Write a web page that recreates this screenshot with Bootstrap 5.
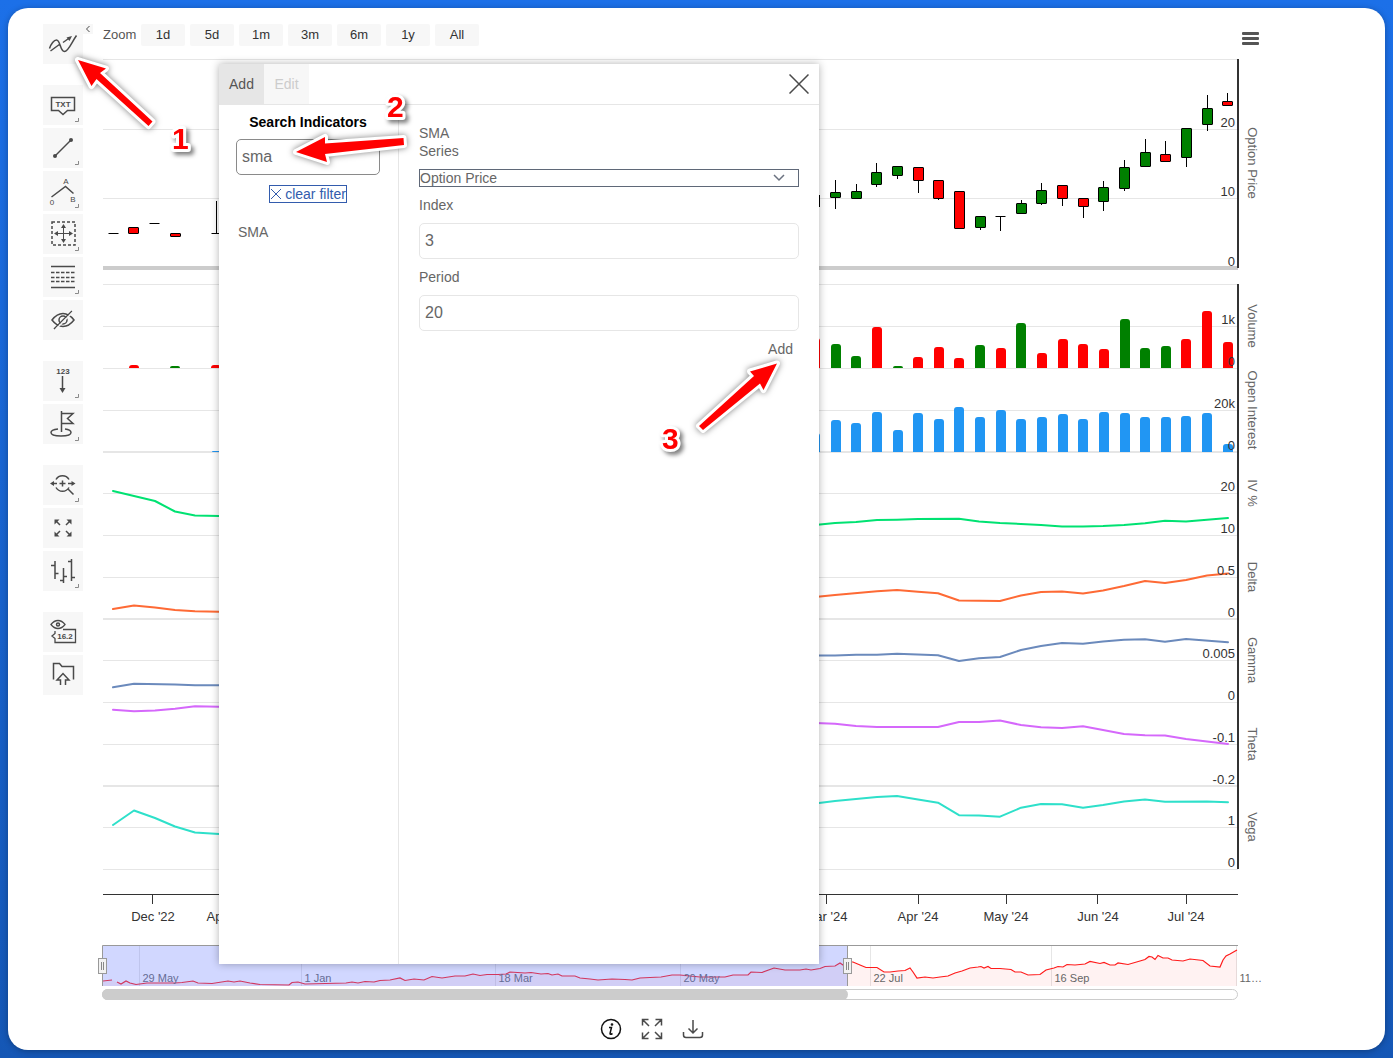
<!DOCTYPE html>
<html lang="en">
<head>
<meta charset="utf-8">
<meta name="viewport" content="width=device-width, initial-scale=1">
<title>Option chart</title>
<link href="https://cdn.jsdelivr.net/npm/bootstrap@5.3.0/dist/css/bootstrap.min.css" rel="stylesheet">
<style>
  body { font-family: "Liberation Sans", Arial, sans-serif; font-size: 14px; color: #333; min-height: 100vh; padding: 8px; background: linear-gradient(#1c70e8, #1557b5) fixed; }
  .shell { background: #fff; border-radius: 20px; padding: 16px 124px 10px 35px; box-shadow: 0 1px 6px rgba(0,0,0,.3); }
  .toolbar-col { width: 40px; gap: 21px; }
  .tool-group { gap: 3px; }
  .tool { width: 40px; height: 40px; border: 0; padding: 0; background: #f7f7f7; display: block; }
  .tool svg, .ico { display: block; fill: none; stroke: #4a4a4a; stroke-width: 1.5; }
  .tool text { fill: #4a4a4a; stroke: none; font-size: 8px; text-anchor: middle; }
  .tool .solid { fill: #4a4a4a; stroke: none; }
  .tool .corner { stroke: #8a8a8a; stroke-width: 1; }
  .fold { width: 10px; height: 10px; border: 0; padding: 0; background: #f7f7f7; }
  .chart-head { height: 26px; padding-left: 10px; gap: 5px; font-size: 13px; }
  .zoom-label { width: 33px; color: #555; line-height: 22px; }
  .range { width: 44px; height: 22px; border: 0; border-radius: 2px; padding: 0; background: #f7f7f7; color: #333; }
  .burger { border: 0; padding: 0; background: none; margin: 8px 2px 0 auto; height: 14px; }
  .burger span { display: block; width: 17px; height: 3px; background: #555; border-radius: 1px; margin-bottom: 2px; }
  .plot { display: block; width: 100%; overflow: visible; font-size: 13px; }
  .dialog-box { left: 126px; top: 40px; width: 600px; height: 900px; background: #fff; color: #666; box-shadow: 0 0 8px rgba(0,0,0,.3); }
  .dialog-head { height: 41px; border-bottom: 1px solid #e6e6e6; }
  .tab-btn { width: 45px; height: 40px; border: 0; padding: 0; background: #f7f7f7; color: #ccc; }
  .tab-btn.on { background: #e6e6e6; color: #555; }
  .close-btn { border: 0; background: none; padding: 0; margin: 0 10px 0 auto; }
  .side { width: 180px; border-right: 1px solid #e6e6e6; padding: 8px 18px 0 17px; }
  .side h2 { font-size: 14px; line-height: 18px; font-weight: 700; color: #000; margin-bottom: 8px; }
  .box { height: 36px; width: 100%; border: 1px solid #e6e6e6; border-radius: 5px; padding: 0 5px; font-size: 16px; color: #666; background: #fff; }
  .box.search { border-color: #8a8a8a; }
  .clear-btn { border: 1px solid #335cad; color: #335cad; background: none; height: 18px; padding: 0; line-height: 16px; margin-top: 10px; gap: 3px; }
  .clear-btn svg { stroke: #335cad; stroke-width: 1; }
  .result { border: 0; background: none; color: #666; padding: 0; margin: 19px 0 0 2px; }
  .params { padding: 19px 20px 0; line-height: 18px; }
  .params label { line-height: 18px; }
  .series { width: 100%; height: 18px; border: 1px solid #5f6878; color: #666; padding: 0; line-height: 16px; appearance: none; margin: 9px 0;
    background: #fff url("data:image/svg+xml,%3Csvg xmlns='http://www.w3.org/2000/svg' viewBox='0 0 12 8'%3E%3Cpath d='M1 1l5 5 5-5' fill='none' stroke='%236b7280' stroke-width='1.5'/%3E%3C/svg%3E") no-repeat right 13px center / 12px 8px; }
  .params .box { margin: 9px 0; }
  .add-btn { border: 0; background: none; color: #666; padding: 0 6px; line-height: 18px; }
  .notes { top: 0; left: 0; width: 100%; overflow: visible; pointer-events: none; fill: #f00; stroke: #fff; stroke-width: 6px; stroke-linejoin: round; paint-order: stroke; font-size: 30px; font-weight: 700; }
  .arrows { filter: drop-shadow(0 0 3px rgba(0,0,0,.5)); }
  .digits { filter: drop-shadow(3px 3px 2px rgba(0,0,0,.5)); }
  .actions { gap: 19px; margin-top: 16px; }
  .actions button { border: 0; background: none; padding: 0; }
</style>
<script src="https://cdn.jsdelivr.net/npm/bootstrap@5.3.0/dist/js/bootstrap.bundle.min.js"></script>
</head>
<body class="d-flex flex-column">
<main class="shell flex-grow-1">
  <div class="d-flex position-relative align-items-start">
    <nav class="toolbar-col d-flex flex-column flex-shrink-0" aria-label="Chart tools">
      <div class="tool-group d-flex flex-column">
        <button class="tool" aria-label="Indicators"><svg width="40" height="40"><path d="M6.500 24.500C8 20 11 16 13.500 16c4 0 3.500 11.500 8 11.500 4 0 7-9 12-16M7.500 27L17 20M20 18.500L27 13.500"/><path class="solid" d="M29 12l-5.500 1.500 3 3.500z"/></svg></button>
      </div>
      <div class="tool-group d-flex flex-column">
        <button class="tool" aria-label="Text label"><svg width="40" height="40"><path d="M8.500 12.500h23v13h-7L20 29.500l-4.500-4h-7z"/><text x="20" y="22" font-weight="700">TXT</text><path class="corner" d="M35.500 33v3.500H32"/></svg></button>
        <button class="tool" aria-label="Line"><svg width="40" height="40"><path d="M12 28L28 12"/><circle class="solid" cx="12" cy="28" r="2"/><circle class="solid" cx="28" cy="12" r="2"/><path class="corner" d="M35.500 33v3.500H32"/></svg></button>
        <button class="tool" aria-label="Elliott line"><svg width="40" height="40"><path d="M8.500 26L22.500 15.500l8 7"/><text x="23" y="13">A</text><text x="9" y="34">0</text><text x="30" y="31">B</text><path class="corner" d="M35.500 33v3.500H32"/></svg></button>
        <button class="tool" aria-label="Measure"><svg width="40" height="40"><rect x="9" y="8" width="23" height="23" stroke-dasharray="3 2"/><path d="M12.500 19.500h16M20.500 11.500v16" stroke-width="1"/><path class="solid" d="M11 19.500l4-2.500v5zM30 19.500l-4-2.500v5zM20.500 10l-2.500 4h5zM20.500 29l-2.500-4h5z"/><path class="corner" d="M35.500 33v3.500H32"/></svg></button>
        <button class="tool" aria-label="Fibonacci"><svg width="40" height="40"><path d="M8 9.500h24M8 30.500h24"/><path d="M8 15.500h24M8 20.500h24M8 24.500h24" stroke-dasharray="3.500 1.500"/><path class="corner" d="M35.500 33v3.500H32"/></svg></button>
        <button class="tool" aria-label="Hide annotations"><svg width="40" height="40"><path d="M9 20q5-6.500 11-6.500T31 20q-5 6.500-11 6.500T9 20zM11 29L29 11"/><circle cx="20" cy="20" r="4"/><path d="M13 29L31 11" stroke="#f7f7f7"/></svg></button>
      </div>
      <div class="tool-group d-flex flex-column">
        <button class="tool" aria-label="Counter"><svg width="40" height="40"><text x="20" y="13" font-weight="700">123</text><path d="M19.500 15v13"/><path class="solid" d="M19.500 32l-3-5h6z"/><path class="corner" d="M35.500 33v3.500H32"/></svg></button>
        <button class="tool" aria-label="Flag"><svg width="40" height="40"><path d="M18.500 28V7M18.500 9.500H30L24.500 14.500 30 19.500H18.500M15 25c-5 .5-7 2-7 3.500 0 2 4 3.500 10 3.500s10-1.500 10-3.500c0-1.500-2-3-6-3.500"/><path class="corner" d="M35.500 33v3.500H32"/></svg></button>
      </div>
      <div class="tool-group d-flex flex-column">
        <button class="tool" aria-label="Zoom"><svg width="40" height="40"><path d="M13 14.500a7.500 7.500 0 0 1 13 0M13 22.500a7.500 7.500 0 0 0 13 0M25 24l5.500 5.500M16.500 18.500h6M19.500 15.500v6M9 18.500h5M25 18.500h5"/><path class="solid" d="M7 18.500l4-2.500v5zM32.500 18.500l-4-2.500v5z"/><path class="corner" d="M35.500 33v3.500H32"/></svg></button>
        <button class="tool" aria-label="Full screen"><svg width="40" height="40"><path d="M17 17l-4-4M23 17l4-4M17 23l-4 4M23 23l4 4"/><path class="solid" d="M11.500 11.500h5l-5 5zM28.500 11.500h-5l5 5zM11.500 28.500h5l-5-5zM28.500 28.500h-5l5-5z"/></svg></button>
        <button class="tool" aria-label="Chart type"><svg width="40" height="40"><path d="M12 10v18M8 14.500h4M12 22.500h3.500M20.500 17v15M17 29.500h3.500M20.500 25.500H24M28.500 8v22M25 10.500h3.500M28.500 26.500H32"/><path class="corner" d="M35.500 33v3.500H32"/></svg></button>
      </div>
      <div class="tool-group d-flex flex-column">
        <button class="tool" aria-label="Price indicator"><svg width="40" height="40"><path d="M8 12.500q3-4 7-4t7 4q-3 4-7 4t-7-4zM20 17.500h12.500v13H12v-4l-3-2.500 3-2.500V19" stroke-width="1.300"/><circle cx="15" cy="12.500" r="1.500"/><text x="22" y="27" font-weight="700">16.2</text></svg></button>
        <button class="tool" aria-label="Save"><svg width="40" height="40"><path d="M10.500 24.500V8.500h6l2.500 3H30.500v13M17.500 30v-5H14l6-6.500 6 6.500h-3.500v5"/></svg></button>
      </div>
    </nav>
    <button class="fold flex-shrink-0" aria-label="Collapse toolbar"><svg class="ico" width="10" height="10" stroke-width="1"><path d="M6.500 2L3.500 5l3 3" stroke-width="1"/></svg></button>

    <section class="flex-grow-1 position-relative">
      <div class="chart-head d-flex align-items-start">
        <span class="zoom-label">Zoom</span>
        <button class="range">1d</button><button class="range">5d</button><button class="range">1m</button><button class="range">3m</button><button class="range">6m</button><button class="range">1y</button><button class="range">All</button>
        <button class="burger" aria-label="Chart menu"><span></span><span></span><span></span></button>
      </div>
      <svg class="plot" id="plot" viewBox="93 50 1168 952" role="img" aria-label="Option price history"></svg>

      <div class="dialog-box position-absolute d-flex flex-column" role="dialog" aria-label="Indicators">
        <div class="dialog-head d-flex flex-shrink-0">
          <button class="tab-btn on">Add</button><button class="tab-btn">Edit</button>
          <button class="close-btn" aria-label="Close"><svg class="ico" width="20" height="20"><path d="M.5.500l19 19M19.500.500l-19 19"/></svg></button>
        </div>
        <div class="d-flex flex-grow-1">
          <div class="side flex-shrink-0">
            <h2 class="text-center"><label for="q">Search Indicators</label></h2>
            <input class="box search" id="q" type="text" value="sma">
            <div class="d-flex justify-content-center">
              <button class="clear-btn d-flex align-items-center"><svg width="12" height="12"><path d="M1 1l10 10M11 1L1 11"/></svg>clear filter</button>
            </div>
            <button class="result">SMA</button>
          </div>
          <form class="params flex-grow-1">
            <div>SMA</div>
            <label class="d-block" for="series">Series</label>
            <select class="series d-block" id="series"><option>Option Price</option></select>
            <label class="d-block" for="index">Index</label>
            <input class="box d-block" id="index" type="text" value="3">
            <label class="d-block" for="period">Period</label>
            <input class="box d-block" id="period" type="text" value="20">
            <div class="text-end"><button class="add-btn" type="button">Add</button></div>
          </form>
        </div>
      </div>
    </section>

    <svg class="notes position-absolute" viewBox="43 24 1218 978">
      <g class="arrows">
        <path d="M78 60L106 68.500 100 73 152.500 121.500 148.500 126 96.500 79 91.500 86z"/>
        <path d="M296 152L325 137 325 143.500 403.500 138 404 145 325 154 327 162z"/>
        <path d="M777 363.500L750 371.500 754 376 699 426 703 430 760 383.500 763.500 390z"/>
      </g>
      <g class="digits"><text x="172" y="149">1</text><text x="387" y="117">2</text><text x="662" y="449">3</text></g>
    </svg>
  </div>

  <div class="actions d-flex justify-content-center">
    <button aria-label="Info"><svg class="ico" width="22" height="22" style="stroke:#111"><circle cx="11" cy="11" r="9.500"/><path d="M9 9.500h2.500L10 15.500q0 1.500 2.500 0"/><circle cx="12" cy="6.500" r=".6"/></svg></button>
    <button aria-label="Expand"><svg class="ico" width="22" height="22"><path d="M1.500 7.500v-6h6M1.500 1.500l6.500 6.500M14.500 1.500h6v6M20.500 1.500L14 8M1.500 14.500v6h6M1.500 20.500L8 14M20.500 14.500v6h-6M20.500 20.500L14 14"/></svg></button>
    <button aria-label="Download"><svg class="ico" width="22" height="22"><path d="M11 2v13M6.500 10.500L11 15l4.500-4.500M1.500 14v3q0 2.500 2.500 2.500h14q2.500 0 2.500-2.500v-3"/></svg></button>
  </div>
</main>

<script>
const out = [];
const line = (x1, y1, x2, y2, c, w = 1) => out.push(`<path d="M${x1} ${y1}L${x2} ${y2}" stroke="${c}" stroke-width="${w}" fill="none"/>`);
const text = (x, y, s, o = '') => out.push(`<text x="${x}" y="${y}" fill="#333" ${o}>${s}</text>`);
const GRID = '#e6e6e6', RED = '#ff0000', GREEN = '#008000', BLUE = '#2196f3';
const L = 103, R = 1238;

// pane grid lines
[59.5,129.5,198.5,284.5,326.5,368.5,410.5,493.5,535.5,577.5,660.5,702.5,744.5,827.5,869.5].forEach(y => line(L, y, R, y, GRID));
[452,619,786].forEach(y => line(L, y, R, y, GRID, 2));
line(L, 268, R, 268, '#ccc', 4);
line(R, 59, R, 268, '#333', 2);
line(R, 284, R, 869, '#333', 2);

// candles: centre x, high, body top, body bottom, low, direction
const candles = [
 [113.5,233.5,233.5,233.5,233.5,1],[133.5,227.5,227.5,233.5,233.5,0],[154.5,223.5,223.5,223.5,223.5,1],[175.5,233.5,233.5,236.5,236.5,0],[216.5,201,233.5,233.5,233.5,1],
 [819.5,195,198,204,207,0],[835.5,180,192.5,197.5,209,1],[856.5,184,191.5,198.5,198.5,1],[876.5,163,172.5,184.5,187,1],[897.5,166.5,166.5,175.5,179,1],[918.5,167.5,167.5,180.5,193,0],
 [938.5,180.5,180.5,198.5,200,0],[959.5,191.5,191.5,228.5,228.5,0],[980.5,216.5,216.5,227.5,230,1],[1000.5,216.5,216.5,216.5,231,1],[1021.5,200,203.5,213.5,213.5,1],
 [1041.5,183,190.5,203.5,205,1],[1062.5,185.5,185.5,198.5,206,0],[1083.5,198.5,198.5,206.5,218,0],[1103.5,181,187.5,201.5,211,1],[1124.5,160,167.5,188.5,191,1],
 [1145.5,139,152.5,166.5,166.5,1],[1165.5,141,154.5,161.5,161.5,0],[1186.5,128.5,128.5,157.5,167,1],[1207.5,95,108.5,124.5,131,1],[1227.5,93,101.5,105.5,105.5,0]];
for (const [x, h, t, b, l, up] of candles) {
  line(x, h, x, l, '#000');
  if (x === 819.5) continue;
  if (t === b) line(x - 5, t, x + 5, t, '#000');
  else out.push(`<rect x="${x - 5}" y="${t}" width="10" height="${b - t}" rx=".5" fill="${up ? GREEN : RED}" stroke="#000"/>`);
}

// columns: left x, top, colour
const bar = (x, y, base, c) => { const r = Math.min(3, base - y); out.push(`<path d="M${x} ${base}V${y + r}q0 ${-r} ${r} ${-r}h${10 - 2 * r}q${r} 0 ${r} ${r}V${base}z" fill="${c}"/>`); };
const xs = [831,851,872,893,913,934,954,975,996,1016,1037,1058,1078,1099,1120,1140,1161,1181,1202,1223];
const vol = [344,356,327,366,357,347,358,345,348,323,353,339,344,349,319,348,346,339,311,342];
const up = '11010001010000111000';
xs.forEach((x, i) => bar(x, vol[i], 368, up[i] === '1' ? GREEN : RED));
bar(810, 338, 368, RED); bar(129, 365, 368, RED); bar(170, 366, 368, GREEN); bar(211, 365, 368, RED);
[420,423,412,430,413,419,407,417,410,419,417,414,419,412,413,417,417,416,413,444].forEach((y, i) => bar(xs[i], y, 452, BLUE));
bar(810, 433, 452, BLUE); bar(212, 451, 452, BLUE);

// line series
const poly = (c, p) => out.push(`<polyline points="${p}" fill="none" stroke="${c}" stroke-width="2" stroke-linejoin="round" stroke-linecap="round"/>`);
poly('#00e272', '113,491 134,496 155,501 175,511.5 195,515.5 219,516 815,525 835,523 856,522 877,520 897,519.7 918,519 959,518.7 979,521.5 1000,523 1021,524 1041,525 1062,526.5 1083,526.5 1103,526 1124,525 1145,523.2 1165,520.7 1186,521.5 1207,519.7 1228,518');
poly('#fe6a35', '113,609 134,605.5 155,607.5 175,610 195,611.2 219,611.8 815,597 835,595 877,591.3 897,590 918,591.8 938,593.3 959,600.5 1000,601 1021,595.5 1041,592 1062,591.5 1083,593.5 1103,590.5 1124,586 1145,581 1165,583 1186,580 1207,575.5 1228,573.5');
poly('#6b8abc', '113,687.3 134,683.8 175,684.5 195,685.2 219,685.3 815,655.5 835,655.5 856,654.7 877,654.7 897,653.7 938,655.2 959,661 979,658.3 1000,657 1021,650 1041,646 1062,643 1083,643.7 1103,641.5 1124,639.7 1145,639.3 1165,641.7 1186,639 1228,642.2');
poly('#d568fb', '113,709.7 134,711.3 155,710.5 175,708.7 195,706.3 219,706.8 815,723 835,723.7 856,726 877,727 938,727 959,722 979,722 1000,720.5 1021,725 1041,727.2 1062,728 1083,726.2 1103,730 1124,734 1145,735.3 1165,735.5 1186,739 1207,741.5 1228,744');
poly('#2ee0ca', '113,825 134,810.5 155,818 175,826.5 195,832.5 219,834 815,803.5 835,801 856,799 877,797 897,796 918,799.5 938,802.7 959,815.2 979,815.5 1000,816.7 1021,807.7 1041,804 1062,804.2 1083,807.8 1103,805 1124,801.5 1145,799.5 1165,801.7 1207,801.5 1228,802.2');

// value axis labels and titles
[[127,'20'],[196,'10'],[266,'0'],[324,'1k'],[366,'0'],[408,'20k'],[450,'0'],[491,'20'],[533,'10'],[575,'0.5'],[617,'0'],[658,'0.005'],[700,'0'],[742,'-0.1'],[784,'-0.2'],[825,'1'],[867,'0']]
  .forEach(([y, s]) => text(1235, y, s, 'text-anchor="end"'));
[[163,'Option Price'],[326,'Volume'],[410,'Open Interest'],[493,'IV %'],[577,'Delta'],[660,'Gamma'],[744,'Theta'],[827,'Vega']]
  .forEach(([y, s]) => out.push(`<text transform="translate(1248 ${y}) rotate(90)" text-anchor="middle" fill="#666">${s}</text>`));

// time axis
line(L, 894.5, R, 894.5, '#333');
[152.5,826.5,918.5,1006.5,1097.5,1186.5].forEach(x => line(x, 894, x, 904, '#333'));
[[153,"Dec '22"],[227,"Apr '23"],[826,"Mar '24"],[918,"Apr '24"],[1006,"May '24"],[1098,"Jun '24"],[1186,"Jul '24"]].forEach(([x, s]) => text(x, 921, s, 'text-anchor="middle"'));

// navigator
const nav = '117,982 121,984 126,981 130,983 136,984.5 147,983 175,983 182,982.5 193,981 198,983 212,983.5 228,981 234,982 240,981 250,983 260,984.5 289,985 292,982.5 298,982 305,984 346,983 352,982 358,983 365,981.5 374,982 380,980.5 390,980 400,978 405,980.5 414,979 424,980 432,976.5 442,978 455,976 465,976 473,974 480,975.5 487,974.5 498,974.5 506,974 510,972 525,973 531,972.5 541,974 548,973.5 552,975 558,974 562,976 575,976 580,978 590,979 598,980 612,979 625,979.5 632,980 640,978 650,977.5 661,977 672,975 680,975 700,977 725,977 733,975 748,975 751,972 762,972.5 774,968 785,970 800,970 806,969 811,970 820,968.5 825,966.5 835,966 840,963 843,965 848,962 853,962 860,965 866,967.5 877,967.5 884,972 890,972 898,971 905,970.5 910,968 913,972 917,978 925,977 933,978 940,977 948,976 955,973 962,971 970,968 978,967 981,966.5 984,968 988,966.5 991,968.5 1000,968.5 1011,969.5 1015,972 1021,972 1028,975 1040,974.5 1046,970 1054,968 1058,966.5 1063,967 1067,964.5 1075,965 1085,964 1090,961.5 1100,963.5 1104,962.5 1110,965 1115,965 1118,963 1128,964.5 1140,961 1145,959.5 1149,956.5 1152,957 1155,959.5 1158,955.5 1163,958 1168,958 1172,960 1183,961 1190,959 1203,960.5 1210,966 1220,967 1223,960 1226,956 1230,954 1237,950';
const ticks = [[139.5,'29 May'],[301.5,'1 Jan'],[495.5,'18 Mar'],[680.5,'20 May'],[870.5,'22 Jul'],[1051.5,'16 Sep'],[1236.5,'11…']];
ticks.forEach(([x]) => line(x, 946, x, 986, GRID));
out.push(`<polygon points="103,986 103,981 112,980 ${nav} 1237,986" fill="#ff0000" fill-opacity=".05"/>`);
out.push(`<polyline points="${nav}" fill="none" stroke="#ff1a1a" stroke-width="1.2"/><polyline points="103,981 112,980" fill="none" stroke="#ff1a1a"/>`);
ticks.forEach(([x, s]) => out.push(`<text x="${x + 3}" y="982" font-size="11" fill="#666">${s}</text>`));
out.push('<rect x="102" y="946" width="745" height="40" fill="#667aff" fill-opacity=".3"/>');
out.push('<path d="M102.5 986V945.500H1238M847.500 945.500V986" fill="none" stroke="#999"/>');
[102.5, 847.5].forEach(x => out.push(`<rect x="${x - 4}" y="958.5" width="8" height="15" fill="#f2f2f2" stroke="#999"/><path d="M${x - 1} 962v8M${x + 1} 962v8" stroke="#888"/>`));
out.push('<rect x="102.5" y="989.5" width="1135" height="10" rx="5" fill="#fff" stroke="#ccc"/><rect x="102" y="989" width="746" height="11" rx="5.5" fill="#ccc"/>');
document.getElementById('plot').innerHTML = out.join('');
</script>
</body>
</html>
